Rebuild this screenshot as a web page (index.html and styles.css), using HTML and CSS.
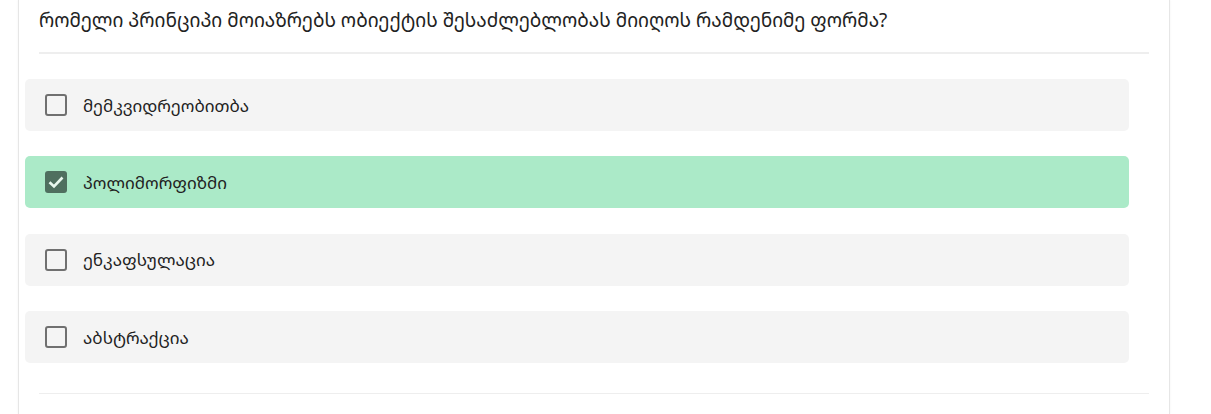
FILE: index.html
```html
<!DOCTYPE html>
<html lang="ka">
<head>
<meta charset="utf-8">
<link rel="stylesheet" href="styles.css">
</head>
<body>
<div class="card">
  <div class="question">რომელი პრინციპი მოიაზრებს ობიექტის შესაძლებლობას მიიღოს რამდენიმე ფორმა?</div>
  <div class="divider"></div>
  <div class="options">
    <label class="option">
      <span class="box"></span>
      <span class="text">მემკვიდრეობითბა</span>
    </label>
    <label class="option selected">
      <span class="box checked">
        <svg viewBox="0 0 22 22" width="22" height="22"><path d="M4.5 11.2 L9 15.5 L17.5 6.5" fill="none" stroke="#e8f7ee" stroke-width="2.6" stroke-linecap="butt" stroke-linejoin="miter"/></svg>
      </span>
      <span class="text">პოლიმორფიზმი</span>
    </label>
    <label class="option">
      <span class="box"></span>
      <span class="text">ენკაფსულაცია</span>
    </label>
    <label class="option">
      <span class="box"></span>
      <span class="text">აბსტრაქცია</span>
    </label>
  </div>
  <div class="divider bottom"></div>
</div>
</body>
</html>
```
FILE: styles.css
```css
html, body {
  margin: 0;
  padding: 0;
  background: #ffffff;
}
body {
  font-family: "Noto Sans Georgian", "DejaVu Sans", sans-serif;
  color: #222222;
  height: 414px;
  overflow: hidden;
}
.card {
  margin-left: 18px;
  border-left: 1px solid #e6e6e6;
  border-right: 1px solid #e6e6e6;
  box-shadow: 0 0 2px rgba(0,0,0,0.06);
  padding: 0 20px;
  box-sizing: content-box;
  background: #fff;
  width: 1110px;
  min-height: 414px;
}
.question {
  padding-top: 6px;
  font-size: 19px;
  line-height: 28px;
  height: 52px;
  box-sizing: border-box;
  white-space: nowrap;
}
.divider {
  height: 2px;
  background: #eeeeee;
}
.options {
  margin-left: -14px;
  margin-right: 20px;
  padding-top: 25px;
  display: flex;
  flex-direction: column;
  gap: 25.4px;
}
.option {
  display: flex;
  align-items: center;
  gap: 16px;
  height: 52px;
  padding-left: 20px;
  background: #f4f4f4;
  border-radius: 5px;
  font-size: 17px;
}
.option.selected {
  background: #abeac8;
}
.box {
  width: 22px;
  height: 22px;
  box-sizing: border-box;
  border: 2.5px solid #707070;
  border-radius: 3px;
  flex: none;
}
.box.checked {
  border: none;
  background: #4f6f5f;
  display: flex;
}
.divider.bottom {
  margin-top: 30px;
  height: 1px;
}
```
